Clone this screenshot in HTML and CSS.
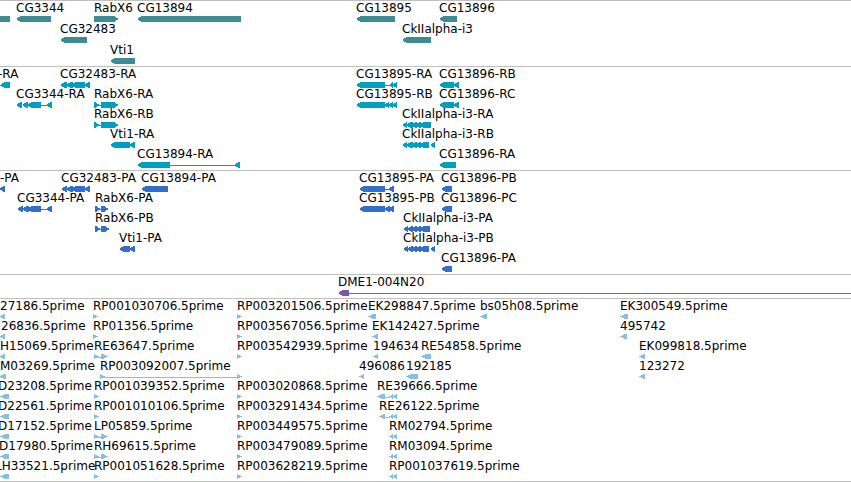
FILE: index.html
```html
<!DOCTYPE html>
<html lang="en">
<head>
<meta charset="utf-8">
<title>Genome browser</title>
<link rel="stylesheet" href="styles.css">
</head>
<body>
<main class="browser" id="browser"></main>
<script src="tracks.js"></script>
</body>
</html>
```
FILE: styles.css
```css
body {
  margin: 0;
  background: #fff;
  color: #000;
  font: 12px/15px "DejaVu Sans", sans-serif;
}

.browser {
  overflow: hidden;
  border-bottom: 1px solid #c0c0c0;
}

.track {
  border-top: 1px solid #c0c0c0;
  padding-bottom: 3px;
}

.track-gene,
.track-est {
  padding-bottom: 2px;
}

.track-gene { color: #3d8c93; }
.track-transcript { color: #009ebf; }
.track-protein { color: #326fcc; }
.track-clone { color: #7859a8; }
.track-est { color: #8abddf; }

/* Every feature shares the single cell of its row and is offset by its start. */
.row {
  display: grid;
  grid-template-columns: minmax(0, 1fr);
  grid-template-rows: 15px 5px;
}

.track-gene .row {
  grid-template-rows: 15px 6px;
}

.label {
  grid-area: 1 / 1;
  color: #000;
  white-space: nowrap;
}

.glyphs {
  grid-area: 2 / 1;
  display: block;
  width: 100%;
  height: 6px;
  overflow: visible;
  fill: currentColor;
  shape-rendering: crispEdges;
}
```
FILE: tracks.js
```js
// Feature: [label, label start, parts]. A part is "<" or ">" for an arrow
// block or "-" for an intron line, followed by its start and end.
const ckRA = [["<", 402, 407], ["<", 406, 413], ["<", 411, 417], ["<", 415, 421], ["<", 419, 431]];
const ckRB = [["<", 402, 407], ["<", 406, 413], ["<", 411, 417], ["<", 415, 421], ["<", 419, 429], ["<", 430, 435]];
const ckPA = [["<", 403, 408], ["<", 407, 413], ["<", 411, 417], ["<", 415, 421], ["<", 419, 430]];
const ckPB = [["<", 403, 408], ["<", 407, 413], ["<", 411, 417], ["<", 415, 421], ["<", 419, 429], ["<", 430, 435]];
const rabR = [[">", 94, 100], ["-", 98, 102], [">", 101, 119]];
const ends = [["<", 389, 393], ["<", 392, 397]];
const left = [["<", 0, 9]];
const rp = [[">", 237, 242]];
const short = [[">", 94, 99]];
const pair = [[">", 94, 99], ["-", 97, 102], [">", 101, 108]];

const tracks = [
  { name: "gene", rows: [
    [["", 0, [["<", -40, 10]]], ["CG3344", 16, [["<", 16, 51]]], ["RabX6", 94, [[">", 94, 119]]], ["CG13894", 137, [["<", 137, 241]]], ["CG13895", 356, [["<", 356, 395]]], ["CG13896", 439, [["<", 439, 457]]]],
    [["CG32483", 60, [["<", 60, 87]]], ["CkIIalpha-i3", 402, [["<", 402, 431]]]],
    [["Vti1", 110, [["<", 110, 135]]]]
  ] },
  { name: "transcript", rows: [
    [["-RA", -2, [["-", 0, 3], ["<", 0, 10]]], ["CG32483-RA", 60, [["<", 60, 67], ["<", 66, 73], ["<", 71, 85], ["<", 84, 90]]], ["CG13895-RA", 356, [["<", 356, 385], ["-", 385, 390], ["<", 389, 393], ["<", 392, 397]]], ["CG13896-RB", 439, [["<", 439, 454], ["<", 453, 459]]]],
    [["CG3344-RA", 16, [["<", 16, 22], ["<", 22, 28], ["<", 27, 41], ["-", 41, 48], ["<", 46, 52]]], ["RabX6-RA", 94, rabR], ["CG13895-RB", 356, [["<", 356, 385], ["<", 384, 389], ["<", 388, 393], ["<", 392, 397]]], ["CG13896-RC", 439, [["<", 439, 454], ["<", 453, 459]]]],
    [["RabX6-RB", 94, rabR], ["CkIIalpha-i3-RA", 402, ckRA]],
    [["Vti1-RA", 110, [["<", 110, 130], ["<", 129, 135]]], ["CkIIalpha-i3-RB", 402, ckRB]],
    [["CG13894-RA", 137, [["<", 137, 170], ["-", 170, 237], ["<", 234, 240]]], ["CG13896-RA", 439, [["<", 439, 456]]]]
  ] },
  { name: "protein", rows: [
    [["-PA", 0, [["<", -1, 5]]], ["CG32483-PA", 61, [["<", 61, 67], ["<", 66, 73], ["<", 71, 85], ["<", 84, 90]]], ["CG13894-PA", 141, [["<", 141, 168]]], ["CG13895-PA", 359, [["<", 359, 385], ["-", 385, 390], ["<", 388, 394]]], ["CG13896-PB", 441, [["<", 441, 452]]]],
    [["CG3344-PA", 17, [["<", 17, 23], ["<", 22, 29], ["<", 27, 41], ["-", 41, 48], ["<", 46, 52]]], ["RabX6-PA", 95, [[">", 95, 101], ["-", 98, 102], [">", 101, 109]]], ["CG13895-PB", 359, [["<", 359, 385], ["<", 384, 390], ["<", 388, 394]]], ["CG13896-PC", 441, [["<", 441, 452]]]],
    [["RabX6-PB", 95, [[">", 95, 101], ["-", 98, 102], [">", 101, 110]]], ["CkIIalpha-i3-PA", 403, ckPA]],
    [["Vti1-PA", 119, [["<", 119, 130], ["<", 129, 135]]], ["CkIIalpha-i3-PB", 403, ckPB]],
    [["CG13896-PA", 441, [["<", 441, 452]]]]
  ] },
  { name: "clone", rows: [
    [["DME1-004N20", 338, [["<", 338, 349], ["-", 349, 20000]]]]
  ] },
  { name: "est", rows: [
    [["27186.5prime", 0, [["<", -1, 5]]], ["RP001030706.5prime", 93, [[">", 93, 98]]], ["RP003201506.5prime", 237, rp], ["EK298847.5prime", 368, [["<", 368, 376]]], ["bs05h08.5prime", 480, [["<", 480, 487]]], ["EK300549.5prime", 620, [["<", 620, 628]]]],
    [["26836.5prime", 1, [["<", -1, 5]]], ["RP01356.5prime", 93, [[">", 93, 98]]], ["RP003567056.5prime", 237, rp], ["EK142427.5prime", 372, [["<", 372, 378]]], ["495742", 620, [["<", 620, 627]]]],
    [["H15069.5prime", 0, [["<", -1, 5]]], ["RE63647.5prime", 94, pair], ["RP003542939.5prime", 237, rp], ["194634", 373, [["<", 373, 378]]], ["RE54858.5prime", 421, [["<", 421, 431]]], ["EK099818.5prime", 639, [["<", 639, 645]]]],
    [["M03269.5prime", 0, [["<", -1, 6]]], ["RP003092007.5prime", 100, [[">", 100, 105], ["-", 103, 238], [">", 237, 242]]], ["496086", 359, [["<", 359, 364]]], ["192185", 406, [["<", 406, 418]]], ["123272", 639, [["<", 639, 645]]]],
    [["D23208.5prime", -2, left], ["RP001039352.5prime", 94, short], ["RP003020868.5prime", 237, rp], ["RE39666.5prime", 377, [["<", 377, 385], ["-", 385, 390], ...ends]]],
    [["D22561.5prime", -2, left], ["RP001010106.5prime", 94, short], ["RP003291434.5prime", 237, rp], ["RE26122.5prime", 379, [["<", 379, 385], ["-", 385, 390], ...ends]]],
    [["D17152.5prime", -2, left], ["LP05859.5prime", 94, pair], ["RP003449575.5prime", 237, rp], ["RM02794.5prime", 389, ends]],
    [["D17980.5prime", -1, left], ["RH69615.5prime", 94, pair], ["RP003479089.5prime", 237, rp], ["RM03094.5prime", 389, ends]],
    [["LH33521.5prime", -5, left], ["RP001051628.5prime", 94, short], ["RP003628219.5prime", 237, rp], ["RP001037619.5prime", 389, ends]]
  ] }
];

function part([kind, start, end], height) {
  if (kind === "-") return `<rect x="${start}" y="3" width="${end - start}" height="1"/>`;
  const head = Math.min(5, end - start);
  const [tip, neck, tail] = kind === "<" ? [start, start + head, end] : [end, end - head, start];
  const mid = height / 2;
  return `<polygon points="${tip},${mid} ${neck},0 ${tail},0 ${tail},${height} ${neck},${height}"/>`;
}

document.getElementById("browser").innerHTML = tracks.map(track => {
  const height = track.name === "est" ? 5 : 6;
  const rows = track.rows.map(row => {
    const labels = row.filter(f => f[0]).map(f => `<span class="label" style="margin-left:${f[1]}px">${f[0]}</span>`).join("");
    const glyphs = row.flatMap(f => f[2]).map(p => part(p, height)).join("");
    return `<div class="row">${labels}<svg class="glyphs" aria-hidden="true">${glyphs}</svg></div>`;
  }).join("");
  return `<section class="track track-${track.name}">${rows}</section>`;
}).join("");
```
